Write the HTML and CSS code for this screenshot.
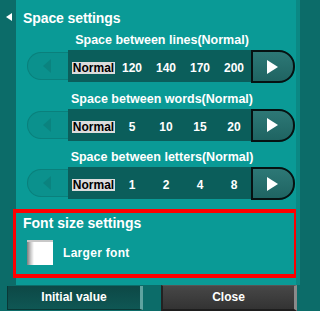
FILE: index.html
```html
<!DOCTYPE html>
<html>
<head>
<meta charset="utf-8">
<link rel="stylesheet" href="styles.css">
</head>
<body>
<div class="window">
  <div class="main">
    <aside class="side"><span class="back"></span></aside>
    <section class="panel">
      <h1 class="title">Space settings</h1>

      <div class="group">
        <div class="label">Space between lines(Normal)</div>
        <div class="slider">
          <div class="prev"><span class="prev-arrow"></span></div>
          <div class="track">
            <span class="opt sel">Normal</span>
            <span class="opt">120</span>
            <span class="opt">140</span>
            <span class="opt">170</span>
            <span class="opt">200</span>
          </div>
          <div class="next"><span class="next-arrow"></span></div>
        </div>
      </div>

      <div class="group">
        <div class="label">Space between words(Normal)</div>
        <div class="slider">
          <div class="prev"><span class="prev-arrow"></span></div>
          <div class="track">
            <span class="opt sel">Normal</span>
            <span class="opt">5</span>
            <span class="opt">10</span>
            <span class="opt">15</span>
            <span class="opt">20</span>
          </div>
          <div class="next"><span class="next-arrow"></span></div>
        </div>
      </div>

      <div class="group">
        <div class="label">Space between letters(Normal)</div>
        <div class="slider">
          <div class="prev"><span class="prev-arrow"></span></div>
          <div class="track">
            <span class="opt sel">Normal</span>
            <span class="opt">1</span>
            <span class="opt">2</span>
            <span class="opt">4</span>
            <span class="opt">8</span>
          </div>
          <div class="next"><span class="next-arrow"></span></div>
        </div>
      </div>

      <div class="font-box">
        <h2 class="font-title">Font size settings</h2>
        <label class="check-row">
          <span class="checkbox"></span>
          <span class="check-label">Larger font</span>
        </label>
      </div>
    </section>
    <div class="edge"></div>
  </div>
  <footer class="bar">
    <button class="btn btn-init">Initial value</button>
    <button class="btn btn-close">Close</button>
  </footer>
</div>
</body>
</html>
```

FILE: styles.css
```css
* { box-sizing: border-box; }

html, body {
  margin: 0;
  padding: 0;
}

body {
  width: 300px;
  height: 311px;
  overflow: hidden;
  background: #0c6c69;
  font-family: "Liberation Sans", Arial, sans-serif;
  font-weight: bold;
  color: #ffffff;
}

.window {
  display: flex;
  flex-direction: column;
  width: 300px;
  height: 311px;
}

.main {
  display: flex;
  height: 285px;
}

.side {
  width: 16px;
  flex: none;
  background: #0c6c69;
}

.back {
  display: block;
  width: 0;
  height: 0;
  margin: 13px 0 0 6px;
  border-right: 6px solid #ffffff;
  border-top: 4px solid transparent;
  border-bottom: 4px solid transparent;
}

.panel {
  width: 280px;
  flex: none;
  background: #0a9a96;
  padding: 10px 0 7px 11px;
  display: flex;
  flex-direction: column;
}

.edge {
  flex: 1;
  background: #0b8884;
}

.title {
  margin: 0 0 0 -4px;
  font-size: 14px;
  line-height: 16px;
  letter-spacing: -0.1px;
  font-weight: bold;
}

.group {
  margin-top: 8.5px;
  width: 268px;
}

.group:first-of-type {
  margin-top: 7px;
}

.label {
  text-align: center;
  font-size: 12.5px;
  line-height: 14px;
  height: 14px;
  white-space: nowrap;
  padding-left: 2px;
}

.slider {
  display: flex;
  align-items: flex-start;
  margin-top: 3px;
  height: 33px;
}

.prev {
  width: 41px;
  height: 28px;
  margin-top: 2px;
  flex: none;
  background: #0b918d;
  border: 1px solid #0a807c;
  border-right: none;
  border-radius: 14px 0 0 14px;
  display: flex;
  align-items: center;
  padding-left: 15px;
}

.prev-arrow {
  display: block;
  width: 0;
  height: 0;
  border-right: 8px solid #0b837f;
  border-top: 7px solid transparent;
  border-bottom: 7px solid transparent;
}

.track {
  width: 183px;
  height: 32px;
  flex: none;
  background: #0b5e5b;
  display: flex;
  align-items: center;
  padding: 4px 0 0 4px;
}

.opt {
  width: 34px;
  text-align: center;
  font-size: 12px;
  line-height: 12px;
  height: 12px;
}

.opt.sel {
  width: 43px;
  background: #dcdcdc;
  color: #000000;
}

.next {
  width: 44px;
  height: 33px;
  flex: none;
  background: linear-gradient(#2d7876, #1f6462);
  border: 2px solid #061212;
  border-radius: 0 16px 16px 0;
  display: flex;
  align-items: center;
  padding-left: 14px;
}

.next-arrow {
  display: block;
  width: 0;
  height: 0;
  border-left: 11px solid #ffffff;
  border-top: 7.5px solid transparent;
  border-bottom: 7.5px solid transparent;
}

.font-box {
  margin: 9px -1px 0 -14px;
  height: 69px;
  border-style: solid;
  border-color: #ff0000;
  border-width: 4px 3px;
  padding: 2px 0 9px 7px;
}

.font-title {
  margin: 0;
  font-size: 14px;
  line-height: 16px;
  font-weight: bold;
}

.check-row {
  display: flex;
  align-items: center;
  margin-top: 9px;
  height: 25px;
}

.checkbox {
  width: 26px;
  height: 25px;
  margin-left: 4px;
  background: linear-gradient(to right, #7c7c7c 0, #cfcfcf 4px, #ffffff 7px);
  box-shadow: inset 0 2px 0 #c8c8c8;
}

.check-label {
  margin-left: 10px;
  font-size: 12px;
  line-height: 14px;
  letter-spacing: 0.3px;
}

.bar {
  display: flex;
  align-items: flex-start;
  height: 26px;
  background: #0c6c69;
}

.btn {
  font-family: "Liberation Sans", Arial, sans-serif;
  font-weight: bold;
  font-size: 12px;
  color: #ffffff;
  padding: 0 0 2px 0;
  margin: 0;
  width: 136px;
  text-align: center;
}

.btn-init {
  margin: 1px 0 0 7px;
  height: 24px;
  line-height: 20px;
  background: linear-gradient(#0d4846, #0f5754);
  border: none;
  border-left: 1px solid #0a3836;
  border-right: 3px solid #5fa3a0;
  border-bottom: 1px solid #0a3836;
}

.btn-close {
  margin-left: 18px;
  height: 26px;
  line-height: 22px;
  background: linear-gradient(#474747, #333333);
  border: none;
  border-left: 2px solid #222222;
  border-top: 1px solid #555555;
  border-right: 3px solid #8a8a8a;
  border-bottom: 2px solid #1e1e1e;
}
```
